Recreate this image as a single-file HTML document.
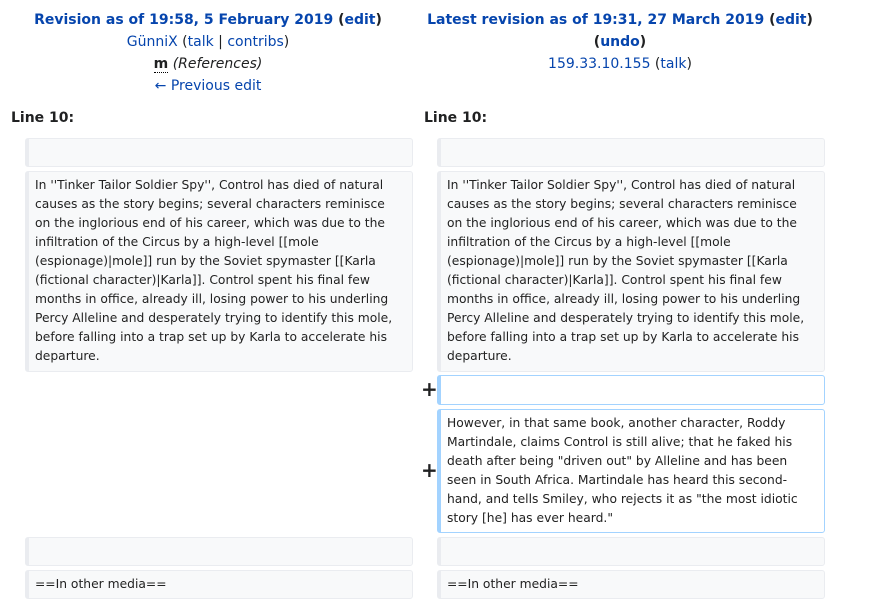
<!DOCTYPE html>
<html><head><meta charset="utf-8"><style>
body{margin:0;background:#fff;font-family:"DejaVu Sans","Liberation Sans",sans-serif;color:#202122;width:874px;height:603px;position:relative;overflow:hidden}
a{color:#0645ad;text-decoration:none}
.hd{position:absolute;top:8px;width:400px;text-align:center;font-size:14px;line-height:22px}
.hd b a,.hd b{font-weight:bold}
.ln{position:absolute;top:110px;font-weight:bold;font-size:14px}
.bx{position:absolute;box-sizing:border-box;background:#f8f9fa;border:1px solid #eaecf0;border-left:4px solid #eaecf0;border-radius:3px;font-size:12.3px;line-height:19px;padding:4px 0 0 6px;white-space:nowrap;color:#222}
.add{background:#fff;border-color:#a3d3ff}
.pl{position:absolute;left:421px;font-size:20px;font-weight:bold;line-height:20px}
</style></head><body>
<div class="hd" style="left:8px;top:9px"><b><a>Revision as of 19:58, 5 February 2019</a> (<a>edit</a>)</b><br><a>GünniX</a> (<a>talk</a> | <a>contribs</a>)<br><b style="border-bottom:1px dotted #000">m</b> <i>(References)</i><br><a>← Previous edit</a></div>
<div class="hd" style="left:420px;top:9px"><b><a>Latest revision as of 19:31, 27 March 2019</a> (<a>edit</a>)<br>(<a>undo</a>)</b><br><a>159.33.10.155</a> (<a>talk</a>)</div>
<div class="ln" style="left:11px">Line 10:</div>
<div class="ln" style="left:424px">Line 10:</div>

<div class="bx" style="left:25px;top:138px;width:388px;height:29px"></div>
<div class="bx" style="left:437px;top:138px;width:388px;height:29px"></div>
<div class="bx" style="left:25px;top:171px;width:388px;height:201px">In ''Tinker Tailor Soldier Spy'', Control has died of natural<br>causes as the story begins; several characters reminisce<br>on the inglorious end of his career, which was due to the<br>infiltration of the Circus by a high-level [[mole<br>(espionage)|mole]] run by the Soviet spymaster [[Karla<br>(fictional character)|Karla]]. Control spent his final few<br>months in office, already ill, losing power to his underling<br>Percy Alleline and desperately trying to identify this mole,<br>before falling into a trap set up by Karla to accelerate his<br>departure.</div>
<div class="bx" style="left:437px;top:171px;width:388px;height:201px">In ''Tinker Tailor Soldier Spy'', Control has died of natural<br>causes as the story begins; several characters reminisce<br>on the inglorious end of his career, which was due to the<br>infiltration of the Circus by a high-level [[mole<br>(espionage)|mole]] run by the Soviet spymaster [[Karla<br>(fictional character)|Karla]]. Control spent his final few<br>months in office, already ill, losing power to his underling<br>Percy Alleline and desperately trying to identify this mole,<br>before falling into a trap set up by Karla to accelerate his<br>departure.</div>
<div class="pl" style="top:379px">+</div>
<div class="bx add" style="left:437px;top:375px;width:388px;height:30px"></div>
<div class="pl" style="top:460px">+</div>
<div class="bx add" style="left:437px;top:409px;width:388px;height:124px">However, in that same book, another character, Roddy<br>Martindale, claims Control is still alive; that he faked his<br>death after being "driven out" by Alleline and has been<br>seen in South Africa. Martindale has heard this second-<br>hand, and tells Smiley, who rejects it as "the most idiotic<br>story [he] has ever heard."</div>
<div class="bx" style="left:25px;top:537px;width:388px;height:29px"></div>
<div class="bx" style="left:437px;top:537px;width:388px;height:29px"></div>
<div class="bx" style="left:25px;top:570px;width:388px;height:29px">==In other media==</div>
<div class="bx" style="left:437px;top:570px;width:388px;height:29px">==In other media==</div>
</body></html>
